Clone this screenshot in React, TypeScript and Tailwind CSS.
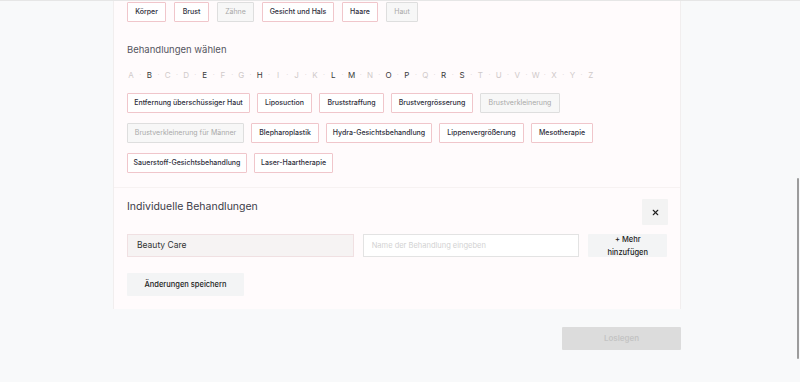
import React from "react";
import { X } from "lucide-react";

type Item = { name: string; on: boolean; w: number };

const categories: Item[] = [
  { name: "Körper", on: true, w: 39 },
  { name: "Brust", on: true, w: 35 },
  { name: "Zähne", on: false, w: 37 },
  { name: "Gesicht und Hals", on: true, w: 72 },
  { name: "Haare", on: true, w: 36 },
  { name: "Haut", on: false, w: 32 },
];

const letters = "ABCDEFGHIJKLMNOPQRSTUVWXYZ".split("");
const activeLetters = "BEHLMOPRS";

const treatmentRows: Item[][] = [
  [
    { name: "Entfernung überschüssiger Haut", on: true, w: 123 },
    { name: "Liposuction", on: true, w: 55 },
    { name: "Bruststraffung", on: true, w: 65 },
    { name: "Brustvergrösserung", on: true, w: 82 },
    { name: "Brustverkleinerung", on: false, w: 80 },
  ],
  [
    { name: "Brustverkleinerung für Männer", on: false, w: 117 },
    { name: "Blepharoplastik", on: true, w: 68 },
    { name: "Hydra-Gesichtsbehandlung", on: true, w: 106 },
    { name: "Lippenvergrößerung", on: true, w: 85 },
    { name: "Mesotherapie", on: true, w: 62 },
  ],
  [
    { name: "Sauerstoff-Gesichtsbehandlung", on: true, w: 120 },
    { name: "Laser-Haartherapie", on: true, w: 79 },
  ],
];

const Chip = ({ item }: { item: Item }) => (
  <button
    style={{ width: item.w }}
    className={
      item.on
        ? "h-[20px] border border-[#f0c6cb] bg-white text-[#2d2d3a] text-[7px] font-medium rounded-[1px] whitespace-nowrap"
        : "h-[20px] border border-[#dedede] bg-[#f7f7f7] text-[#a8a8a8] text-[7px] rounded-[1px] whitespace-nowrap"
    }>
    {item.name}
  </button>
);

export default function App() {
  return (
    <div className="relative w-[800px] h-[382px] overflow-hidden bg-[#f8f9fa] font-['Inter',sans-serif] border-t border-[#e6e6e6]">
      <div className="ml-[113px] w-[568px] bg-[#fffbfc] border-x border-[#f1eeee]">
        <div className="px-[13px] pt-[1px] pb-[14px]">
          <div className="flex gap-[8px]">
            {categories.map((c) => (
              <Chip key={c.name} item={c} />
            ))}
          </div>

          <h3 className="mt-[21px] text-[9.5px] leading-[14px] text-[#55555f]">
            Behandlungen wählen
          </h3>

          <div className="mt-[11px] flex items-center h-[14px] text-[8px]">
            {letters.map((l, i) => (
              <React.Fragment key={l}>
                {i > 0 && (
                  <span className="w-[10.4px] text-center text-[#e4dcdc] text-[7px]">·</span>
                )}
                <span
                  className={
                    activeLetters.includes(l)
                      ? "w-[8px] text-center text-[#3a3a3a]"
                      : "w-[8px] text-center text-[#d0caca]"
                  }>
                  {l}
                </span>
              </React.Fragment>
            ))}
          </div>

          <div className="mt-[11px] flex flex-col gap-[10px]">
            {treatmentRows.map((row, i) => (
              <div key={i} className="flex gap-[7px]">
                {row.map((t) => (
                  <Chip key={t.name} item={t} />
                ))}
              </div>
            ))}
          </div>
        </div>

        <div className="border-t border-[#f7f2f2] px-[13px] pt-[11px] pb-[13px]">
          <div className="flex items-start justify-between">
            <h3 className="mt-[1px] text-[10.5px] leading-[14px] text-[#3c3c48]">
              Individuelle Behandlungen
            </h3>
            <button className="mr-[-1px] w-[26px] h-[26px] bg-[#f3f3f3] flex items-center justify-center rounded-[1px]">
              <X className="w-[9px] h-[9px] text-[#222]" strokeWidth={3} />
            </button>
          </div>

          <div className="mt-[9px] flex gap-[9px] items-center">
            <div className="w-[228px] h-[23px] bg-[#f6f3f3] border border-[#f0e0e2] flex items-center px-[9px] text-[8.5px] text-[#333]">
              Beauty Care
            </div>
            <div className="w-[218px] h-[23px] bg-white border border-[#e3e3e3] flex items-center px-[8px] text-[7.5px] text-[#d2d2d2]">
              Name der Behandlung eingeben
            </div>
            <button className="w-[79px] h-[23px] bg-[#f3f4f5] text-[7.5px] leading-[13px] text-[#222] font-medium rounded-[1px] flex flex-col items-center justify-center">
              <span>+ Mehr</span>
              <span>hinzufügen</span>
            </button>
          </div>

          <button className="mt-[16px] w-[117px] h-[23px] bg-[#f3f4f5] text-[7.5px] text-[#222] font-medium rounded-[1px]">
            Änderungen speichern
          </button>
        </div>
      </div>

      <div className="mt-[14px] ml-[562px] w-[119px]">
        <button className="w-full h-[23px] bg-[#dcdcdc] text-[8px] font-semibold text-[#c4c4c4] rounded-[1px]">
          Loslegen
        </button>
      </div>

      <div className="absolute right-[1px] top-[177px] w-[2px] h-[181px] bg-[#9c9c9c] rounded-full" />
    </div>
  );
}
